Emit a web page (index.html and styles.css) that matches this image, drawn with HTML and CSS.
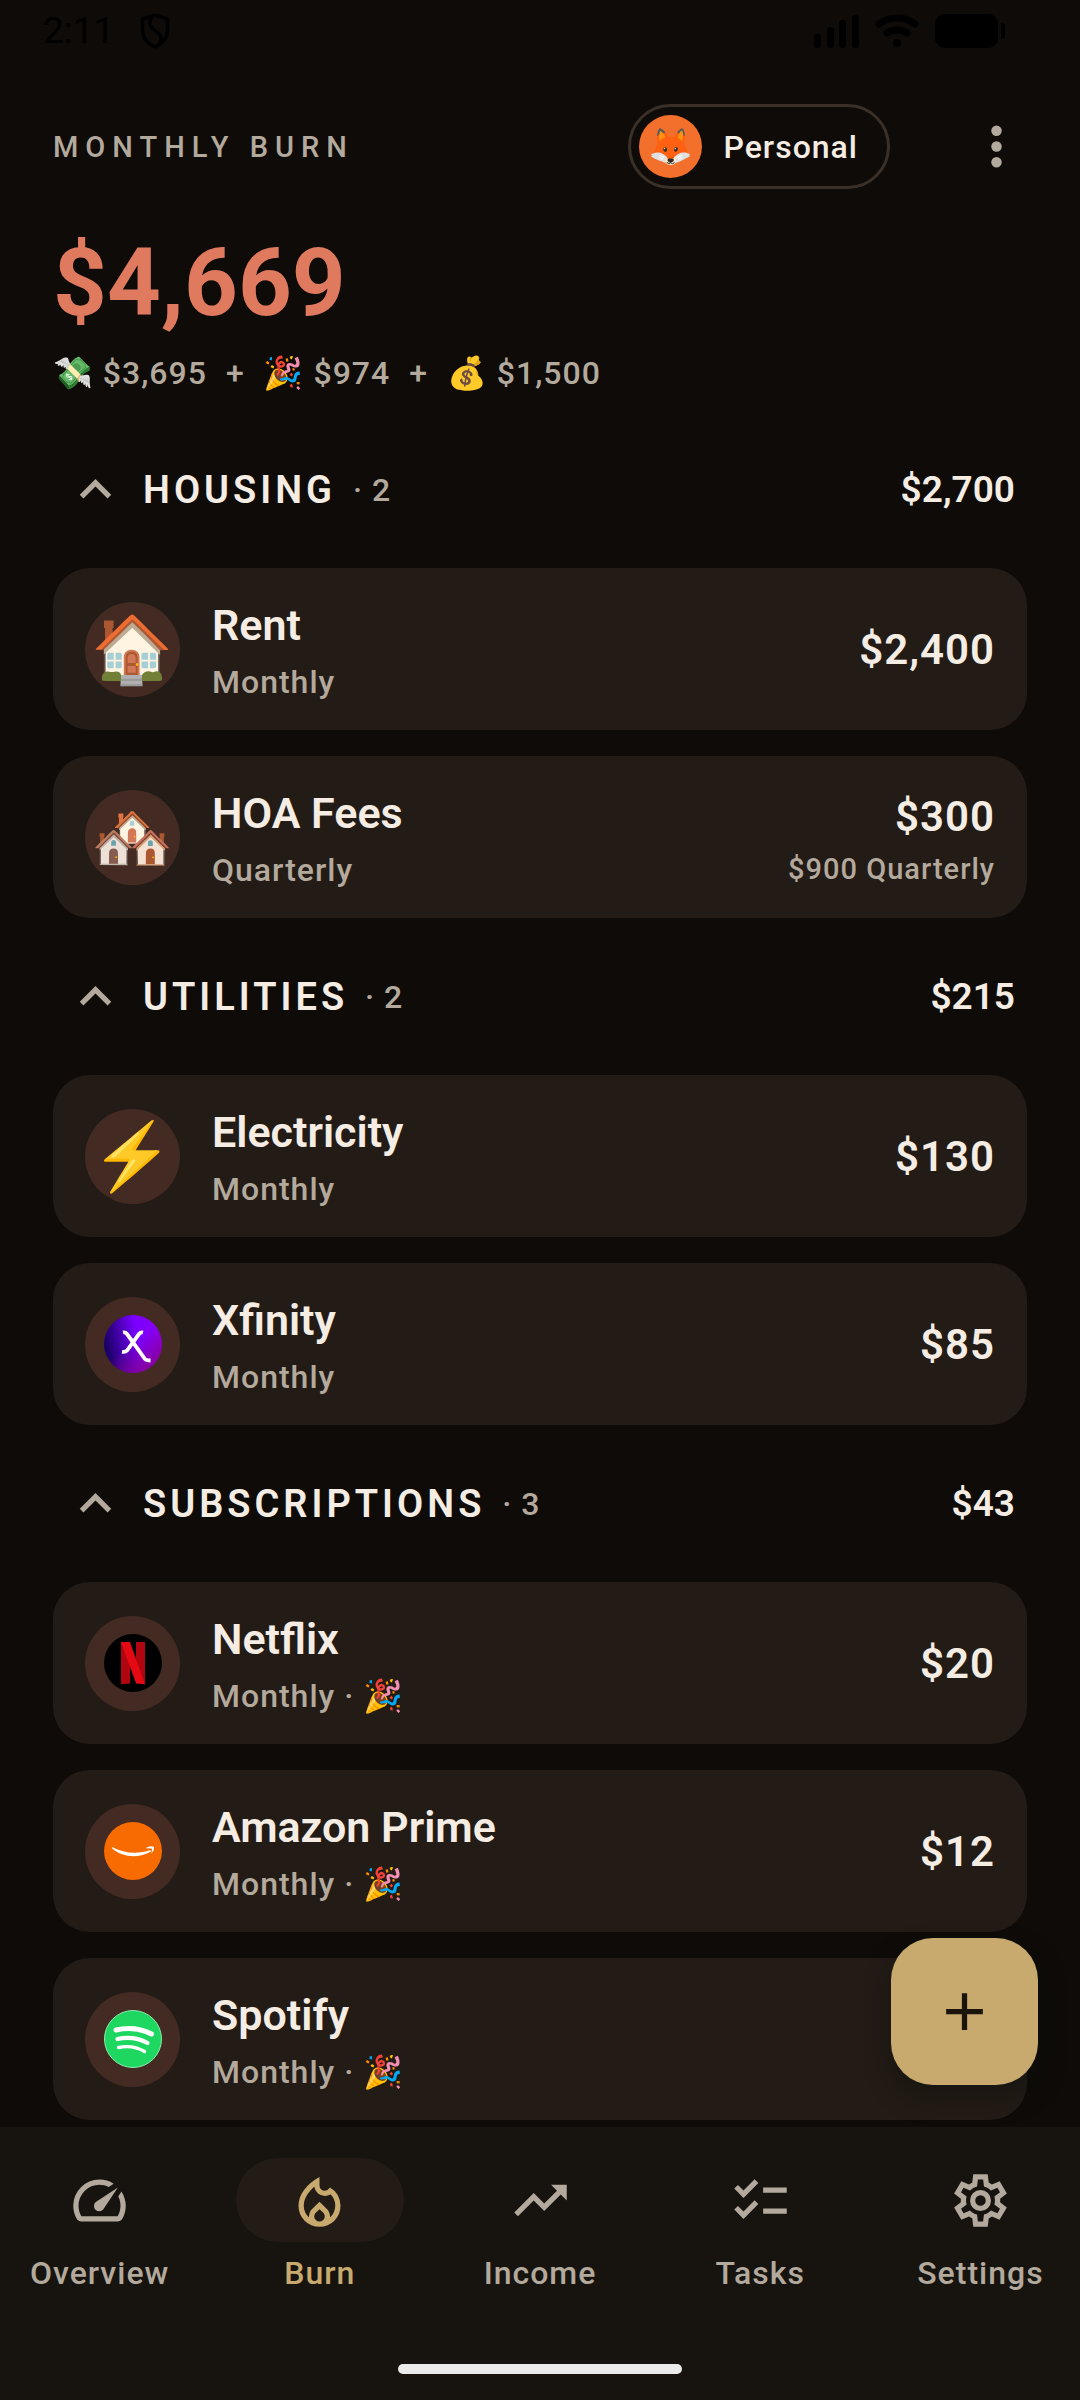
FILE: index.html
```html
<!DOCTYPE html>
<html lang="en">
<head>
<meta charset="utf-8">
<meta name="viewport" content="width=device-width, initial-scale=1">
<title>Monthly Burn</title>
<link rel="stylesheet" href="styles.css">
</head>
<body>
<svg class="defs" aria-hidden="true">
  <symbol id="chevron" viewBox="0 0 24 24"><path d="M12 8l-6 6 1.41 1.41L12 10.83l4.59 4.58L18 14z"/></symbol>
</svg>
<div class="app">
  <div class="status">
    <div class="status-left">
      <span>2:11</span>
      <svg class="shield" viewBox="0 0 30 36" fill="none" stroke="#000" stroke-width="3.4" stroke-linejoin="round"><path d="M15 2L27.500 6V17C27.500 25 22 31 15 34C8 31 2.500 25 2.500 17V6z"/><path d="M12 3C9 9 9 12 13 16L19 21C22 24 22 27 19 31"/></svg>
    </div>
    <div class="status-right">
      <svg class="signal" viewBox="0 0 45 34"><rect x="0" y="20" width="7" height="14" rx="3.500"/><rect x="13" y="13" width="7" height="21" rx="3.500"/><rect x="25" y="6" width="7" height="28" rx="3.500"/><rect x="38" y="1" width="7" height="33" rx="3.500"/></svg>
      <svg class="wifi" viewBox="0 0 44 34" fill="none" stroke="#000" stroke-width="7" stroke-linecap="round"><path d="M4 10C15 2 29 2 40 10"/><path d="M12 19C18 15 26 15 32 19"/><circle cx="22" cy="29" r="4" fill="#000" stroke="none"/></svg>
      <svg class="battery" viewBox="0 0 70 34"><rect width="63" height="34" rx="10"/><path d="M66 9Q70 9 70 13V21Q70 25 66 25z"/></svg>
    </div>
  </div>

  <header class="top">
    <div class="title-row">
      <h1 class="title">MONTHLY BURN</h1>
      <button class="profile" type="button"><span class="avatar">🦊</span><span>Personal</span></button>
      <button class="more" type="button" aria-label="More options"><svg viewBox="0 0 24 24"><circle cx="12" cy="6" r="2"/><circle cx="12" cy="12" r="2"/><circle cx="12" cy="18" r="2"/></svg></button>
    </div>
    <p class="total">$4,669</p>
    <p class="breakdown"><span>💸 $3,695</span><span>+</span><span>🎉 $974</span><span>+</span><span>💰 $1,500</span></p>
  </header>

  <main class="list">
    <section class="group">
      <button class="group-head" type="button" aria-expanded="true"><svg><use href="#chevron"/></svg><span class="group-name">HOUSING</span><span class="count">· 2</span><span class="group-sum">$2,700</span></button>
      <article class="card"><div class="icon">🏠</div><div class="info"><h2>Rent</h2><p>Monthly</p></div><div class="cost"><strong>$2,400</strong></div></article>
      <article class="card"><div class="icon">🏘️</div><div class="info"><h2>HOA Fees</h2><p>Quarterly</p></div><div class="cost"><strong>$300</strong><small>$900 Quarterly</small></div></article>
    </section>

    <section class="group">
      <button class="group-head" type="button" aria-expanded="true"><svg><use href="#chevron"/></svg><span class="group-name">UTILITIES</span><span class="count">· 2</span><span class="group-sum">$215</span></button>
      <article class="card"><div class="icon">⚡</div><div class="info"><h2>Electricity</h2><p>Monthly</p></div><div class="cost"><strong>$130</strong></div></article>
      <article class="card">
        <div class="icon"><svg class="brand" viewBox="0 0 58 58"><defs><linearGradient id="xa" x1="0" y1=".6" x2="1" y2=".4"><stop offset=".05" stop-color="#1a0066"/><stop offset=".6" stop-color="#7a00ff"/><stop offset="1" stop-color="#8a00f0"/></linearGradient><linearGradient id="xb" x1=".3" y1=".3" x2=".8" y2="1"><stop offset=".3" stop-color="#8a0090" stop-opacity="0"/><stop offset="1" stop-color="#8a0090"/></linearGradient></defs><circle cx="29" cy="29" r="29" fill="url(#xa)"/><circle cx="29" cy="29" r="29" fill="url(#xb)"/><g fill="none" stroke="#fff" stroke-width="3.800"><path d="M19 17.500Q21.500 17 23 19L41 44Q42.500 45.500 46.500 45.500"/><path d="M39 17.500Q36.500 17 35 19L23 35.500Q21.500 37.300 18 36.800"/></g></svg></div>
        <div class="info"><h2>Xfinity</h2><p>Monthly</p></div><div class="cost"><strong>$85</strong></div>
      </article>
    </section>

    <section class="group">
      <button class="group-head" type="button" aria-expanded="true"><svg><use href="#chevron"/></svg><span class="group-name">SUBSCRIPTIONS</span><span class="count">· 3</span><span class="group-sum">$43</span></button>
      <article class="card">
        <div class="icon"><svg class="brand" viewBox="0 0 58 58"><circle cx="29" cy="29" r="29"/><path d="M17 8h9v41.500l-9 .8zM32 8h9v42l-9-.8z" fill="#b1060f"/><path d="M17 8h9l15 42.500q-4-.8-9-1.200z" fill="#e50914"/></svg></div>
        <div class="info"><h2>Netflix</h2><p>Monthly · 🎉</p></div><div class="cost"><strong>$20</strong></div>
      </article>
      <article class="card">
        <div class="icon"><svg class="brand" viewBox="0 0 58 58"><circle cx="29" cy="29" r="29" fill="#f76b00"/><path d="M8 25C20 31.500 34 32.500 46.500 28L47 29.500C35 36.500 19 36 8 26.300z" fill="#fff"/><path d="M42.500 25.500Q48 23.500 50 25Q50.500 28 47 31.800Q48.500 28 48 26.800Q46.500 26 42.500 26.500z" fill="#fff"/></svg></div>
        <div class="info"><h2>Amazon Prime</h2><p>Monthly · 🎉</p></div><div class="cost"><strong>$12</strong></div>
      </article>
      <article class="card">
        <div class="icon"><svg class="brand" viewBox="0 0 58 58"><circle cx="29" cy="29" r="28.500" fill="#1ed760" stroke="#8fe8b0" stroke-width="1"/><g fill="none" stroke="#fff" stroke-linecap="round"><path d="M12 20Q31 15.500 47.500 24" stroke-width="5"/><path d="M13.500 29Q30 25.500 43.500 33" stroke-width="4.200"/><path d="M14.500 37.500Q29 34.500 40.500 41.500" stroke-width="3.400"/></g></svg></div>
        <div class="info"><h2>Spotify</h2><p>Monthly · 🎉</p></div><div class="cost"><strong>$11</strong></div>
      </article>
    </section>
  </main>

  <button class="fab" type="button" aria-label="Add expense"><svg viewBox="0 0 24 24"><path d="M19 13h-6v6h-2v-6H5v-2h6V5h2v6h6z"/></svg></button>

  <nav class="nav">
    <div class="tabs">
      <a class="tab" href="#overview"><span class="pill"><svg viewBox="0 -960 960 960"><path d="M418-340q24 24 62 23.500t56-27.500l224-336-336 224q-27 18-28.500 55t22.500 61Zm62-460q59 0 113.500 16.500T696-734l-76 48q-33-17-68.500-25.500T480-720q-133 0-226.500 93.500T160-400q0 42 11.500 83t32.500 77h552q23-38 33.500-79t10.500-85q0-36-8.500-70T766-540l48-76q30 47 47.500 100T880-406q1 57-13 109t-41 99q-11 18-30 28t-40 10H204q-21 0-40-10t-30-28q-26-45-40-95.500T80-400q0-83 31.500-155.500t86-127Q252-737 325-768.500T480-800Z"/></svg></span><span>Overview</span></a>
      <a class="tab active" href="#burn" aria-current="page"><span class="pill"><svg viewBox="0 -960 960 960"><path d="M240-400q0 52 21 98.500t60 81.500q-1-5-1-9v-9q0-32 12-60t35-51l113-111 113 111q23 23 35 51t12 60v9q0 4-1 9 39-35 60-81.500t21-98.500q0-50-18.500-94.500T648-574q-20 13-42 19.500t-45 6.500q-62 0-107.500-41T401-690q-39 33-69 68.500t-50.500 72Q261-513 250.500-475T240-400Zm240 52-57 56q-11 11-17 25t-6 29q0 32 23.500 55t56.500 23q33 0 56.500-23t23.500-55q0-16-6-29.500T537-292l-57-56Zm0-492v132q0 34 23.500 57t57.500 23q18 0 33.500-7.500T622-658l18-22q74 42 117 117t43 163q0 134-93 227T480-80q-134 0-227-93t-93-227q0-129 86.500-245T480-840Z"/></svg></span><span>Burn</span></a>
      <a class="tab" href="#income"><span class="pill"><svg viewBox="0 0 24 24"><path d="M16 6l2.290 2.290-4.880 4.880-4-4L2 16.590 3.410 18l6-6 4 4 6.300-6.290L22 12V6z"/></svg></span><span>Income</span></a>
      <a class="tab" href="#tasks"><span class="pill"><svg viewBox="0 0 24 24"><path d="M22 7h-9v2h9V7zm0 8h-9v2h9v-2zM5.540 11L2 7.460l1.410-1.410 2.120 2.120 4.240-4.240 1.410 1.410L5.540 11zm0 8L2 15.460l1.410-1.410 2.120 2.120 4.240-4.240 1.410 1.410L5.540 19z"/></svg></span><span>Tasks</span></a>
      <a class="tab" href="#settings"><span class="pill"><svg viewBox="0 -960 960 960"><path d="m370-80-16-128q-13-5-24.500-12T307-235l-119 50L78-375l103-78q-1-7-1-13.500v-27q0-6.500 1-13.500L78-585l110-190 119 50q11-8 23-15t24-12l16-128h220l16 128q13 5 24.500 12t22.500 15l119-50 110 190-103 78q1 7 1 13.500v27q0 6.500-2 13.500l103 78-110 190-118-50q-11 8-23 15t-24 12L590-80H370Zm70-80h79l14-106q31-8 57.500-23.500T639-327l99 41 39-68-86-65q5-14 7-29.500t2-31.500q0-16-2-31.500t-7-29.500l86-65-39-68-99 42q-22-23-48.500-38.500T533-694l-13-106h-79l-14 106q-31 8-57.500 23.500T321-633l-99-41-39 68 86 64q-5 15-7 30t-2 32q0 16 2 31t7 30l-86 65 39 68 99-42q22 23 48.500 38.500T427-266l13 106Z"/><circle cx="480" cy="-480" r="120" fill="none" stroke="currentColor" stroke-width="80"/></svg></span><span>Settings</span></a>
    </div>
    <div class="home-bar"></div>
  </nav>
</div>
</body>
</html>
```
FILE: styles.css
```css
:root {
  --bg: #0e0b08;
  --card: #231b16;
  --nav: #171410;
  --text: #f5ede3;
  --muted: #b3a99c;
  --gold: #c8a96e;
  --coral: #e07a5f;
}

* { box-sizing: border-box; }

body {
  margin: 0;
  background: var(--bg);
  color: var(--text);
  font-family: Roboto, "Noto Color Emoji", sans-serif;
  font-weight: 500;
}

h1, h2, p { margin: 0; }
h1, h2, strong, small { font-weight: inherit; font-size: inherit; }
button { margin: 0; padding: 0; border: 0; background: none; color: inherit; font: inherit; cursor: pointer; }
svg { display: block; }
.defs { display: none; }

.app {
  display: flex;
  flex-direction: column;
  height: 100vh;
  overflow: hidden;
}

/* Status bar */
.status {
  display: flex;
  justify-content: space-between;
  align-items: center;
  flex: none;
  height: 61px;
  padding: 0 75px 0 43px;
  color: #000;
  font-size: 37px;
  font-weight: 400;
}
.status-left, .status-right { display: flex; align-items: center; }
.status-left { gap: 26px; }
.status-right { gap: 16px; }
.shield { width: 30px; height: 36px; }
.signal { width: 45px; height: 34px; }
.wifi { width: 44px; height: 34px; }
.battery { width: 70px; height: 34px; }

/* Header */
.top { flex: none; padding: 32px 53px 0; }
.title-row { display: flex; align-items: center; height: 107px; }
.title {
  flex: 1;
  color: var(--muted);
  font-size: 29px;
  font-weight: 500;
  letter-spacing: 7px;
}
.profile {
  display: flex;
  align-items: center;
  gap: 21px;
  height: 85px;
  padding: 0 29px 0 8px;
  border: 3px solid #3a3028;
  border-radius: 43px;
  font-size: 32px;
  letter-spacing: 1px;
}
.avatar {
  display: flex;
  align-items: center;
  justify-content: center;
  width: 63px;
  height: 63px;
  border-radius: 50%;
  background: #f26f2c;
  font-size: 36px;
  letter-spacing: 0;
}
.more { display: flex; justify-content: center; width: 126px; margin: 0 -32px 0 43px; }
.more svg { width: 63px; height: 63px; fill: var(--muted); }
.total {
  margin-top: 27px;
  color: var(--coral);
  font-size: 94px;
  font-weight: 700;
  line-height: 112px;
}
.breakdown {
  display: flex;
  gap: 19px;
  margin-top: 12px;
  color: var(--muted);
  font-size: 32px;
  line-height: 44px;
  letter-spacing: 1px;
}

/* Groups */
.list { flex: 1; min-height: 0; overflow: hidden; padding: 42px 53px 0; }
.group {
  display: flex;
  flex-direction: column;
  gap: 26px;
  margin-bottom: 26px;
}
.group-head {
  display: flex;
  align-items: center;
  height: 105px;
  padding: 0 12px 0 11px;
  text-align: left;
  font-size: 37px;
}
.group-head svg { width: 63px; height: 63px; margin-right: 16px; fill: var(--muted); }
.group-name { font-size: 38px; font-weight: 600; letter-spacing: 4px; }
.count { margin-left: 17px; color: var(--muted); font-size: 32px; letter-spacing: 1px; }
.group-sum { margin-left: auto; font-weight: 600; }

.card {
  display: flex;
  align-items: center;
  height: 162px;
  padding: 0 32px;
  border-radius: 37px;
  background: var(--card);
}
.icon {
  display: flex;
  align-items: center;
  justify-content: center;
  width: 95px;
  height: 95px;
  border-radius: 50%;
  background: #432a22;
  font-size: 66px;
  line-height: 95px;
}
.brand { width: 58px; height: 58px; }
.info { flex: 1; padding: 2px 0 0 32px; }
.info h2 { font-size: 43px; font-weight: 600; line-height: 63px; }
.info p { color: var(--muted); font-size: 32px; line-height: 50px; letter-spacing: 1px; }
.cost { display: flex; flex-direction: column; text-align: right; letter-spacing: 1px; }
.cost strong { font-size: 42px; font-weight: 600; line-height: 63px; }
.cost small { color: var(--muted); font-size: 29px; line-height: 42px; }

/* Add button floats over the list */
.fab {
  position: fixed;
  right: 42px;
  bottom: 315px;
  display: flex;
  align-items: center;
  justify-content: center;
  width: 147px;
  height: 147px;
  border-radius: 42px;
  background: var(--gold);
  box-shadow: 0 12px 24px rgba(14, 17, 12, 0.5);
}
.fab svg { width: 63px; height: 63px; fill: #1a140a; }

/* Bottom navigation */
.nav {
  flex: none;
  height: 273px;
  padding: 31px 0 26px;
  display: flex;
  flex-direction: column;
  background: var(--nav);
}
.tabs { display: flex; gap: 21px; }
.tab {
  flex: 1 1 0;
  display: flex;
  flex-direction: column;
  align-items: center;
  gap: 10px;
  color: var(--muted);
  font-size: 32px;
  line-height: 42px;
  letter-spacing: 1px;
  text-decoration: none;
}
.pill {
  display: flex;
  align-items: center;
  justify-content: center;
  width: 168px;
  height: 84px;
  border-radius: 42px;
}
.pill svg { width: 63px; height: 63px; fill: currentColor; }
.active { color: var(--gold); }
.active .pill { background: var(--card); }
.home-bar {
  width: 284px;
  height: 10px;
  margin: auto auto 0;
  border-radius: 5px;
  background: #ebebeb;
}
```
